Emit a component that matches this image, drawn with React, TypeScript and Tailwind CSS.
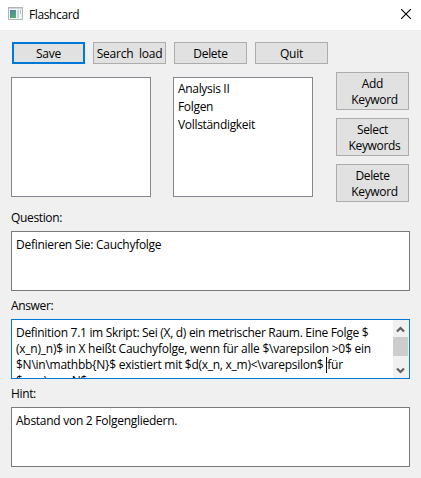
import React from "react";

const toolbar = [
  { label: "Save", style: "border-2 border-[#0078d7] tracking-[-0.2px]" },
  { label: "Search  load", style: "border border-[#adadad] tracking-[-0.25px]" },
  { label: "Delete", style: "border border-[#adadad] tracking-[-0.3px]" },
  { label: "Quit", style: "border border-[#adadad] tracking-[-0.2px]" },
];

const keywordButtons = [
  ["Add", "Keyword"],
  ["Select", "Keywords"],
  ["Delete", "Keyword"],
];

const keywords = ["Analysis II", "Folgen", "Vollständigkeit"];

const answer = [
  { text: "Definition 7.1 im Skript: Sei (X, d) ein metrischer Raum. Eine Folge $", style: "tracking-[-0.3px]" },
  { text: "(x_n)_n)$ in X heißt Cauchyfolge, wenn für alle $\\varepsilon >0$ ein", style: "tracking-[-0.24px]" },
  { text: "$N\\in\\mathbb{N}$ existiert mit $d(x_n, x_m)<\\varepsilon$ ", style: "tracking-[-0.26px]", tail: "für" },
  { text: "$m,n\\geq N$.", style: "tracking-[-0.1px]" },
];

function AppIcon() {
  return (
    <svg width="16" height="14" viewBox="0 0 16 14" shapeRendering="crispEdges">
      <defs>
        <linearGradient id="screen" x1="0" y1="0" x2="0.6" y2="1">
          <stop offset="0" stopColor="#4a7fa5" />
          <stop offset="1" stopColor="#55ad78" />
        </linearGradient>
      </defs>
      <rect x="0.5" y="0.5" width="14" height="12" fill="#f4f4f4" stroke="#b0b4b8" />
      <rect x="1" y="1" width="13" height="1" fill="#d4d8dc" />
      <rect x="2" y="3" width="6" height="8" fill="url(#screen)" />
      <rect x="9" y="3" width="2" height="8" fill="#c8d9e2" />
      <rect x="12" y="3" width="1" height="4" fill="#a9c8b8" />
    </svg>
  );
}

function Chevron({ down = false }: { down?: boolean }) {
  return (
    <svg width="9" height="7" viewBox="0 0 9 7" className={down ? "rotate-180" : ""}>
      <path d="M1 5.5 L4.5 2 L8 5.5" fill="none" stroke="#606060" strokeWidth="2.2" />
    </svg>
  );
}

function Label({ children }: { children: React.ReactNode }) {
  return <div className="h-4 tracking-[-0.35px]">{children}</div>;
}

export default function App() {
  return (
    <div className="flex h-[478px] w-[421px] flex-col overflow-hidden bg-[#f0f0f0] font-['Open_Sans','Noto_Sans',sans-serif] text-[12px] leading-4 whitespace-pre text-black">
      <header className="flex h-[30px] shrink-0 items-start bg-white pl-2">
        <div className="pt-[7px]"><AppIcon /></div>
        <h1 className="ml-[5px] pt-[7px] tracking-[-0.38px]">Flashcard</h1>
        <svg className="mt-[9px] mr-[10px] ml-auto" width="10" height="10" viewBox="0 0 10 10">
          <path d="M0 0 L10 10 M10 0 L0 10" stroke="#000" strokeWidth="1.1" />
        </svg>
      </header>

      <nav className="mt-3 ml-3 flex shrink-0 gap-2">
        {toolbar.map((b) => (
          <button key={b.label} className={`flex h-[22px] w-[73px] items-center justify-center bg-[#e1e1e1] pt-[2px] ${b.style}`}>
            {b.label}
          </button>
        ))}
      </nav>

      <section className="mt-2 ml-[11px] flex h-[130px] shrink-0 items-start">
        <div className="mt-[5px] h-[120px] w-[140px] border border-[#828790] bg-white" />
        <ul className="mt-[5px] ml-[22px] h-[120px] w-[140px] border border-[#828790] bg-white pt-[2px] pl-1 leading-[18px] tracking-[-0.32px]">
          {keywords.map((k) => <li key={k}>{k}</li>)}
        </ul>
        <div className="ml-[23px] flex flex-col gap-2">
          {keywordButtons.map(([top, bottom]) => (
            <button key={top} className="flex h-[38px] w-[73px] flex-col items-center justify-center border border-[#adadad] bg-[#e1e1e1] pt-[2px] tracking-[-0.33px]">
              <span>{top}</span>
              <span className="pl-1">{bottom}</span>
            </button>
          ))}
        </div>
      </section>

      <main className="ml-[11px] flex w-[399px] flex-col pt-[8px]">
        <Label>Question:</Label>
        <div className="mt-[5px] h-[60px] border border-[#7a7a7a] bg-white pt-[5px] pl-1 tracking-[-0.27px]">
          Definieren Sie: Cauchyfolge
        </div>
        <div className="mt-[7px]"><Label>Answer:</Label></div>
        <div className="mt-[5px] flex h-[60px] justify-between overflow-hidden border border-[#0078d7] bg-white">
          <div className="pt-[5px] pl-1">
            {answer.map((line) => (
              <div key={line.text} className={`flex h-4 ${line.style}`}>
                <span>{line.text}</span>
                {line.tail && <span className="border-l border-black">{line.tail}</span>}
              </div>
            ))}
          </div>
          <div className="flex h-[58px] w-4 shrink-0 flex-col bg-[#f0f0f0]">
            <div className="flex h-[17px] w-[15px] items-center justify-center pt-px"><Chevron /></div>
            <div className="h-[19px] w-[15px] bg-[#cdcdcd]" />
            <div className="mt-[5px] flex h-[17px] w-[15px] items-center justify-center pt-px"><Chevron down /></div>
          </div>
        </div>
        <div className="mt-[7px]"><Label>Hint:</Label></div>
        <div className="mt-[5px] h-[60px] border border-[#7a7a7a] bg-white pt-[5px] pl-1 tracking-[-0.27px]">
          Abstand von 2 Folgengliedern.
        </div>
      </main>
    </div>
  );
}
